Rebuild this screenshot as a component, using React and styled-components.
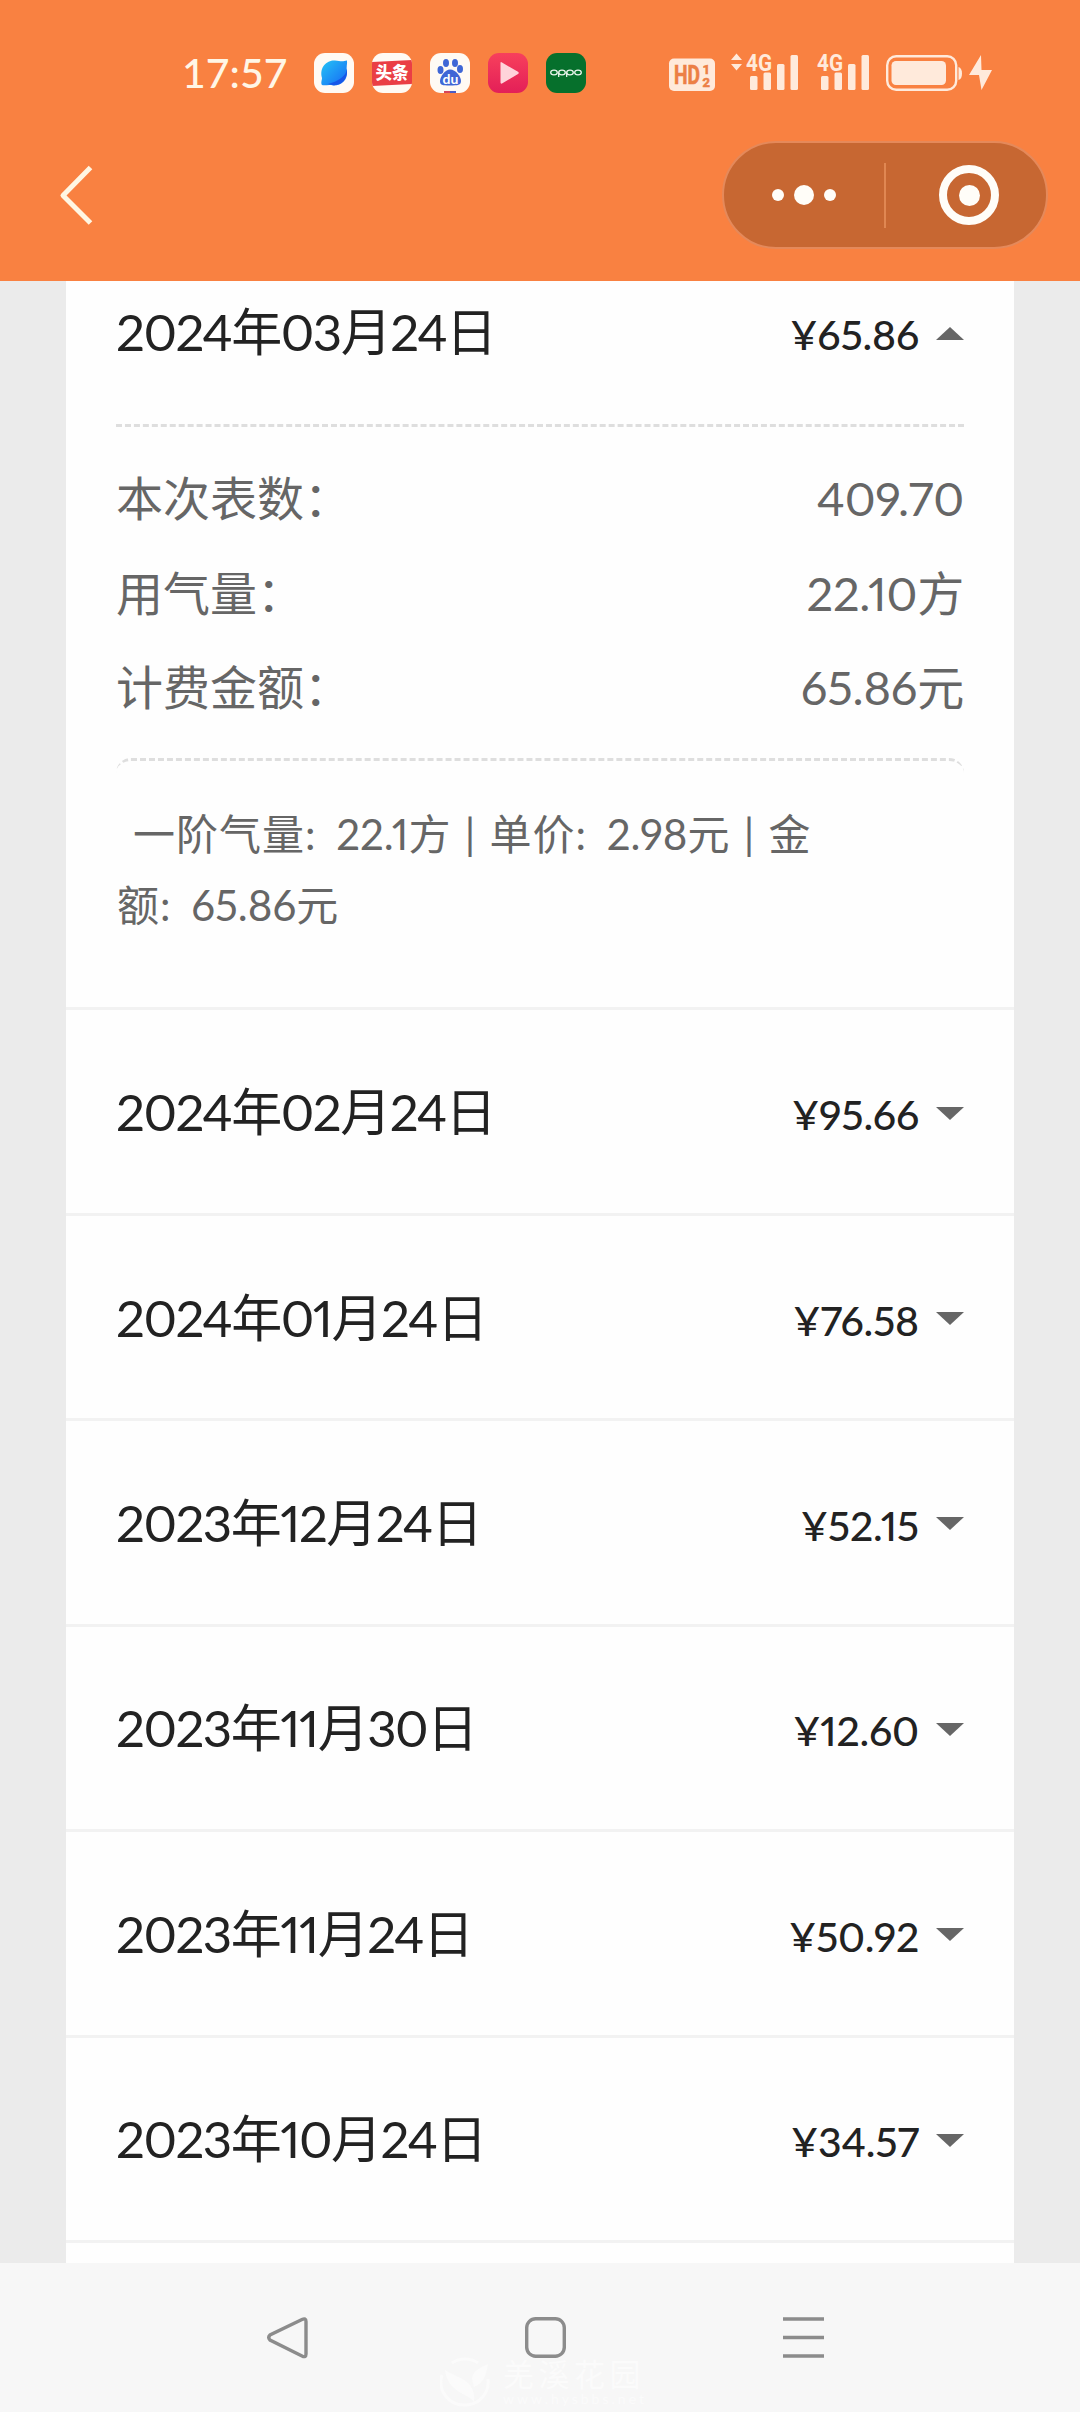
import React from 'react';
import styled, { createGlobalStyle } from "styled-components";

const GlobalStyle = createGlobalStyle`
  * {
    box-sizing: border-box;
  }
  body {
    margin: 0;
    background: #ebebeb;
    font-family: Lato, "Noto Sans CJK SC", sans-serif;
    font-variant-numeric: proportional-nums;
    color: #222;
  }
`;

const Screen = styled.div`
  display: flex;
  flex-direction: column;
  width: 1080px;
  height: 2412px;
  overflow: hidden;
`;

const Header = styled.header`
  flex: none;
  height: 281px;
  background: #f98141;
`;

const StatusBar = styled.div`
  display: flex;
  justify-content: space-between;
  height: 141px;
  padding: 53px 88px 0 182px;
`;
const StatusGroup = styled.div`
  display: flex;
  align-items: flex-start;
  gap: ${props => props.gap || 0}px;
`;
const Clock = styled.div`
  width: 114px;
  font-size: 41px;
  line-height: 40px;
  font-weight: 500;
  font-variant-numeric: normal;
  white-space: nowrap;
  color: #fff6e6;
`;
const AppIcon = styled.svg`
  display: block;
  width: 40px;
  height: 40px;
  border-radius: 11px;
  background: ${props => props.bg || "#fffaf4"};
`;
const StatusIcons = styled.svg`
  display: block;
  width: 324px;
  height: 48px;
  margin-top: -4px;
`;

const TitleBar = styled.div`
  display: flex;
  justify-content: space-between;
  padding: 0 32px 0 58px;
`;
const BackIcon = styled.svg`
  display: block;
  width: 40px;
  height: 64px;
  margin-top: 22px;
`;
const Capsule = styled.div`
  display: flex;
  align-items: center;
  width: 326px;
  height: 108px;
  border: 2px solid #e5895a;
  border-radius: 54px;
  background: #c76732;
`;
const CapsuleHalf = styled.div`
  display: flex;
  align-items: center;
  justify-content: center;
  gap: 10px;
  ${props => props.divided ? `
    width: 162px;
    height: 65px;
    border-right: 2px solid #e08752;
  ` : `
    flex: 1;
    padding-left: 6px;
  `}
`;
const Dot = styled.span`
  width: ${props => props.size}px;
  height: ${props => props.size}px;
  border-radius: 50%;
  background: #fffdf8;
`;
const Ring = styled.div`
  display: flex;
  align-items: center;
  justify-content: center;
  width: 60px;
  height: 60px;
  border: 8px solid #fffdf8;
  border-radius: 50%;
`;

const Content = styled.main`
  flex: 1;
  min-height: 0;
  margin: 0 66px;
  background: #fefefe;
  overflow: hidden;
`;
const Bill = styled.section`
  border-bottom: 3px solid #f2f2f2;
`;
const BillHead = styled.div`
  display: flex;
  align-items: center;
  justify-content: space-between;
  height: ${props => props.open ? 143 : 202.45}px;
  padding: ${props => props.open ? "0 50px 41px" : "1px 50px 0"};
`;
const BillDate = styled.div`
  font-size: 51px;
  line-height: 60px;
  letter-spacing: -1.5px;
  white-space: nowrap;
`;
const Amount = styled.div`
  display: flex;
  align-items: center;
  padding-top: 6px;
  font-size: 41px;
  line-height: 48px;
  letter-spacing: -0.2px;
  font-weight: 500;
  white-space: nowrap;
`;
const Arrow = styled.i`
  width: 0;
  height: 0;
  margin: -4px 0 0 17px;
  border: solid transparent;
  border-width: 0 14px;
  ${props => props.up ? "border-bottom: 13px solid #666;" : "border-top: 13px solid #666;"}
`;

const Details = styled.div`
  height: 334px;
  margin: 0 50px;
  padding-top: 24px;
  border-top: 3px dashed #dedede;
  color: #666;
`;
const DetailRow = styled.div`
  display: flex;
  align-items: baseline;
  justify-content: space-between;
  height: 94.5px;
  font-size: 47px;
  line-height: 94px;
  white-space: nowrap;
`;
const DetailValue = styled.span`
  letter-spacing: -0.2px;
`;
const Tier = styled.p`
  height: 249.4px;
  margin: 0 50px;
  padding: 38px 0 0 1px;
  border-top: 3px dashed #dedede;
  border-radius: 15px;
  font-size: 42px;
  line-height: 70.5px;
  text-indent: 16px;
  word-spacing: 3.5px;
  white-space: pre;
  color: #666;
`;
const TierLabel = styled.span`
  letter-spacing: 1px;
  word-spacing: 8px;
`;

const NavBar = styled.nav`
  position: relative;
  display: flex;
  flex: none;
  justify-content: space-between;
  height: 149px;
  padding: 53px 255px 0 266px;
  background: #f7f7f7;
`;
const NavIcon = styled.svg`
  display: block;
  width: 43px;
  height: 43px;
  fill: none;
  stroke: #8c8c8c;
  stroke-width: 3.4;
`;
const Watermark = styled.div`
  position: absolute;
  left: 440px;
  top: 94px;
  display: flex;
  gap: 13px;
  color: #fbfbfb;
`;
const WatermarkText = styled.div`
  font-size: 31px;
  line-height: 34px;
  letter-spacing: 4.5px;
  white-space: nowrap;
`;
const WatermarkUrl = styled.div`
  font-size: 14px;
  line-height: 16px;
  letter-spacing: 3px;
`;

const bills = [
  { date: "2024年02月24日", amount: "¥95.66" },
  { date: "2024年01月24日", amount: "¥76.58" },
  { date: "2023年12月24日", amount: "¥52.15" },
  { date: "2023年11月30日", amount: "¥12.60" },
  { date: "2023年11月24日", amount: "¥50.92" },
  { date: "2023年10月24日", amount: "¥34.57" }
];

const details = [
  ["本次表数：", "409.70"],
  ["用气量：", "22.10方"],
  ["计费金额：", "65.86元"]
];

class Status extends React.Component {
  render() {
    return (
      <StatusBar>
        <StatusGroup gap={18}>
          <Clock>17:57</Clock>
          <AppIcon viewBox="0 0 40 40">
            <defs>
              <linearGradient id="browser" x1="0" y1="0" x2="1" y2="1">
                <stop offset="0" stopColor="#25c3f5" />
                <stop offset="1" stopColor="#1668f5" />
              </linearGradient>
            </defs>
            <path d="M8 32C6.500 30 8 27 8 25C5 14 13 7 21 7.500C26 8 28 9 33 7.500C33.500 11 32 14 33 18C34 27 27 33 19 32.500C15 31 11 33 8 32Z" fill="url(#browser)" />
            <path d="M33 16C32 23 25 28 14 31C25 35 34 28 33 16Z" fill="#1757e8" />
          </AppIcon>
          <AppIcon viewBox="0 0 40 40">
            <path d="M0 9L40 7V31L0 33Z" fill="#ea3e45" />
            <text x="20" y="26" textAnchor="middle" fontSize="16.5" fontWeight="900" fill="#fff">头条</text>
          </AppIcon>
          <AppIcon viewBox="0 0 40 40">
            <g fill="#3f66d6">
              <ellipse cx="10.5" cy="17" rx="3" ry="4" />
              <ellipse cx="16" cy="10" rx="3" ry="4" />
              <ellipse cx="25" cy="10" rx="3" ry="4" />
              <ellipse cx="30" cy="16" rx="3" ry="4" />
              <path d="M20 16.500C26 16.500 31 24 31 28C31 32 28 32.500 20 32.500S10 32 10 28C10 24 15 16.500 20 16.500Z" />
            </g>
            <text x="20.500" y="30.500" textAnchor="middle" fontSize="14" fontWeight="700" fill="#fff">du</text>
            <path d="M14 38H20V40H14Z" fill="#d6455c" />
            <path d="M20 38H26V40H20Z" fill="#4a5cc4" />
          </AppIcon>
          <AppIcon viewBox="0 0 40 40" bg="linear-gradient(#f7405c, #e31f58)">
            <path d="M12.500 10Q12.500 8.500 14 9.500L30 18.800Q31.500 20 30 21L14 30.500Q12.500 31 12.500 29.500Z" fill="#ffd3da" />
          </AppIcon>
          <AppIcon viewBox="0 0 40 40" bg="#06702c">
            <g fill="none" stroke="#e6f3e9" strokeWidth="1.300">
              <ellipse cx="8" cy="19.500" rx="3.300" ry="2.300" />
              <ellipse cx="16" cy="19.500" rx="3.300" ry="2.300" />
              <ellipse cx="24" cy="19.500" rx="3.300" ry="2.300" />
              <ellipse cx="32" cy="19.500" rx="3.300" ry="2.300" />
              <path d="M12.700 19.500V24M20.700 19.500V24" />
            </g>
          </AppIcon>
        </StatusGroup>
        <StatusIcons viewBox="668 49 324 48" fill="#ffeadb">
          <rect x="669" y="58.500" width="46" height="32.500" rx="5" />
          <g fill="#ec7f45" stroke="#ec7f45" strokeWidth="0.600" fontFamily="Roboto, sans-serif" fontWeight="700">
            <text x="674" y="84" fontSize="25" textLength="26" lengthAdjust="spacingAndGlyphs">HD</text>
            <text x="703" y="73.500" fontSize="13">1</text>
            <text x="702.500" y="87" fontSize="13">2</text>
          </g>
          <path d="M731 60L736.500 53.500L742 60ZM731 64L736.500 70.500L742 64Z" />
          {[0, 71].map(x => (
            <g key={x} transform={`translate(${x} 0)`}>
              <text x="746" y="70.500" fontFamily="Roboto, sans-serif" fontWeight="700" fontSize="24" textLength="26" lengthAdjust="spacingAndGlyphs">4G</text>
              <rect x="750" y="76" width="7.500" height="14" rx="1.500" />
              <rect x="763.500" y="72.500" width="7.500" height="17.500" rx="1.500" />
              <rect x="777" y="64" width="7.500" height="26" rx="1.500" />
              <rect x="790.500" y="55" width="7.500" height="35" rx="1.500" />
            </g>
          ))}
          <rect x="887.200" y="56.200" width="69" height="33.600" rx="9" fill="none" stroke="#ffeadb" strokeWidth="2.400" />
          <rect x="891.500" y="61" width="54.500" height="24" rx="4.500" />
          <path d="M958.500 67Q962 68 962 73.500T958.500 80Z" />
          <path d="M981 55L969 75H979L981.500 90L992 70H981.500Z" />
        </StatusIcons>
      </StatusBar>
    );
  }
};

class Title extends React.Component {
  render() {
    return (
      <TitleBar>
        <BackIcon viewBox="0 0 40 64">
          <path d="M32.500 4.500L5 32.500L32.500 60" fill="none" stroke="#fff6e2" strokeWidth="5" strokeLinejoin="round" />
        </BackIcon>
        <Capsule>
          <CapsuleHalf divided>
            <Dot size={12} />
            <Dot size={20} />
            <Dot size={12} />
          </CapsuleHalf>
          <CapsuleHalf>
            <Ring><Dot size={21} /></Ring>
          </CapsuleHalf>
        </Capsule>
      </TitleBar>
    );
  }
};

class BillItem extends React.Component {
  render() {
    const { date, amount, open, children } = this.props;
    return (
      <Bill>
        <BillHead open={open}>
          <BillDate>{date}</BillDate>
          <Amount>{amount}<Arrow up={open} /></Amount>
        </BillHead>
        {children}
      </Bill>
    );
  }
};

class NavButtons extends React.Component {
  render() {
    return (
      <NavBar>
        <NavIcon viewBox="0 0 43 43">
          <path d="M36 3.500L4 19Q1.500 21.500 4 24L36 40Q40 42 40 38V5.500Q40 1.500 36 3.500Z" />
        </NavIcon>
        <NavIcon viewBox="0 0 43 43">
          <rect x="2.700" y="2.700" width="37.600" height="37.600" rx="9" />
        </NavIcon>
        <NavIcon viewBox="0 0 43 43">
          <path d="M1 3H42M1 21.500H42M1 40H42" />
        </NavIcon>
        <Watermark>
          <svg width="50" height="50" viewBox="0 0 50 50" fill="#fbfbfb">
            <path d="M5 13C14 20 37 22 34 45C28 36 8 36 5 13Z" />
            <path d="M32 22C33 13 40 11 48 7C46 18 44 26 34 30Z" />
            <path d="M2 18A23 23 0 0 0 25 48A23 23 0 0 0 48 22M12 6A23 23 0 0 1 38 6" fill="none" stroke="#fbfbfb" strokeWidth="3" />
          </svg>
          <div>
            <WatermarkText>羌溪花园</WatermarkText>
            <WatermarkUrl>www.hysbbs.net</WatermarkUrl>
          </div>
        </Watermark>
      </NavBar>
    );
  }
};

export default class App extends React.Component {
  render() {
    return (
      <React.Fragment>
        <GlobalStyle />
        <Screen>
          <Header>
            <Status />
            <Title />
          </Header>
          <Content>
            <BillItem date="2024年03月24日" amount="¥65.86" open>
              <Details>
                {details.map(([label, value]) => (
                  <DetailRow key={label}>
                    <span>{label}</span>
                    <DetailValue>{value}</DetailValue>
                  </DetailRow>
                ))}
              </Details>
              <Tier>
                <TierLabel>一阶气量: </TierLabel>
                22.1方 | <TierLabel>单价: </TierLabel>
                2.98元 | <TierLabel>金{"\n"}额: </TierLabel>
                65.86元
              </Tier>
            </BillItem>
            {bills.map(bill => <BillItem key={bill.date} {...bill} />)}
            <BillItem />
          </Content>
          <NavButtons />
        </Screen>
      </React.Fragment>
    );
  }
};
